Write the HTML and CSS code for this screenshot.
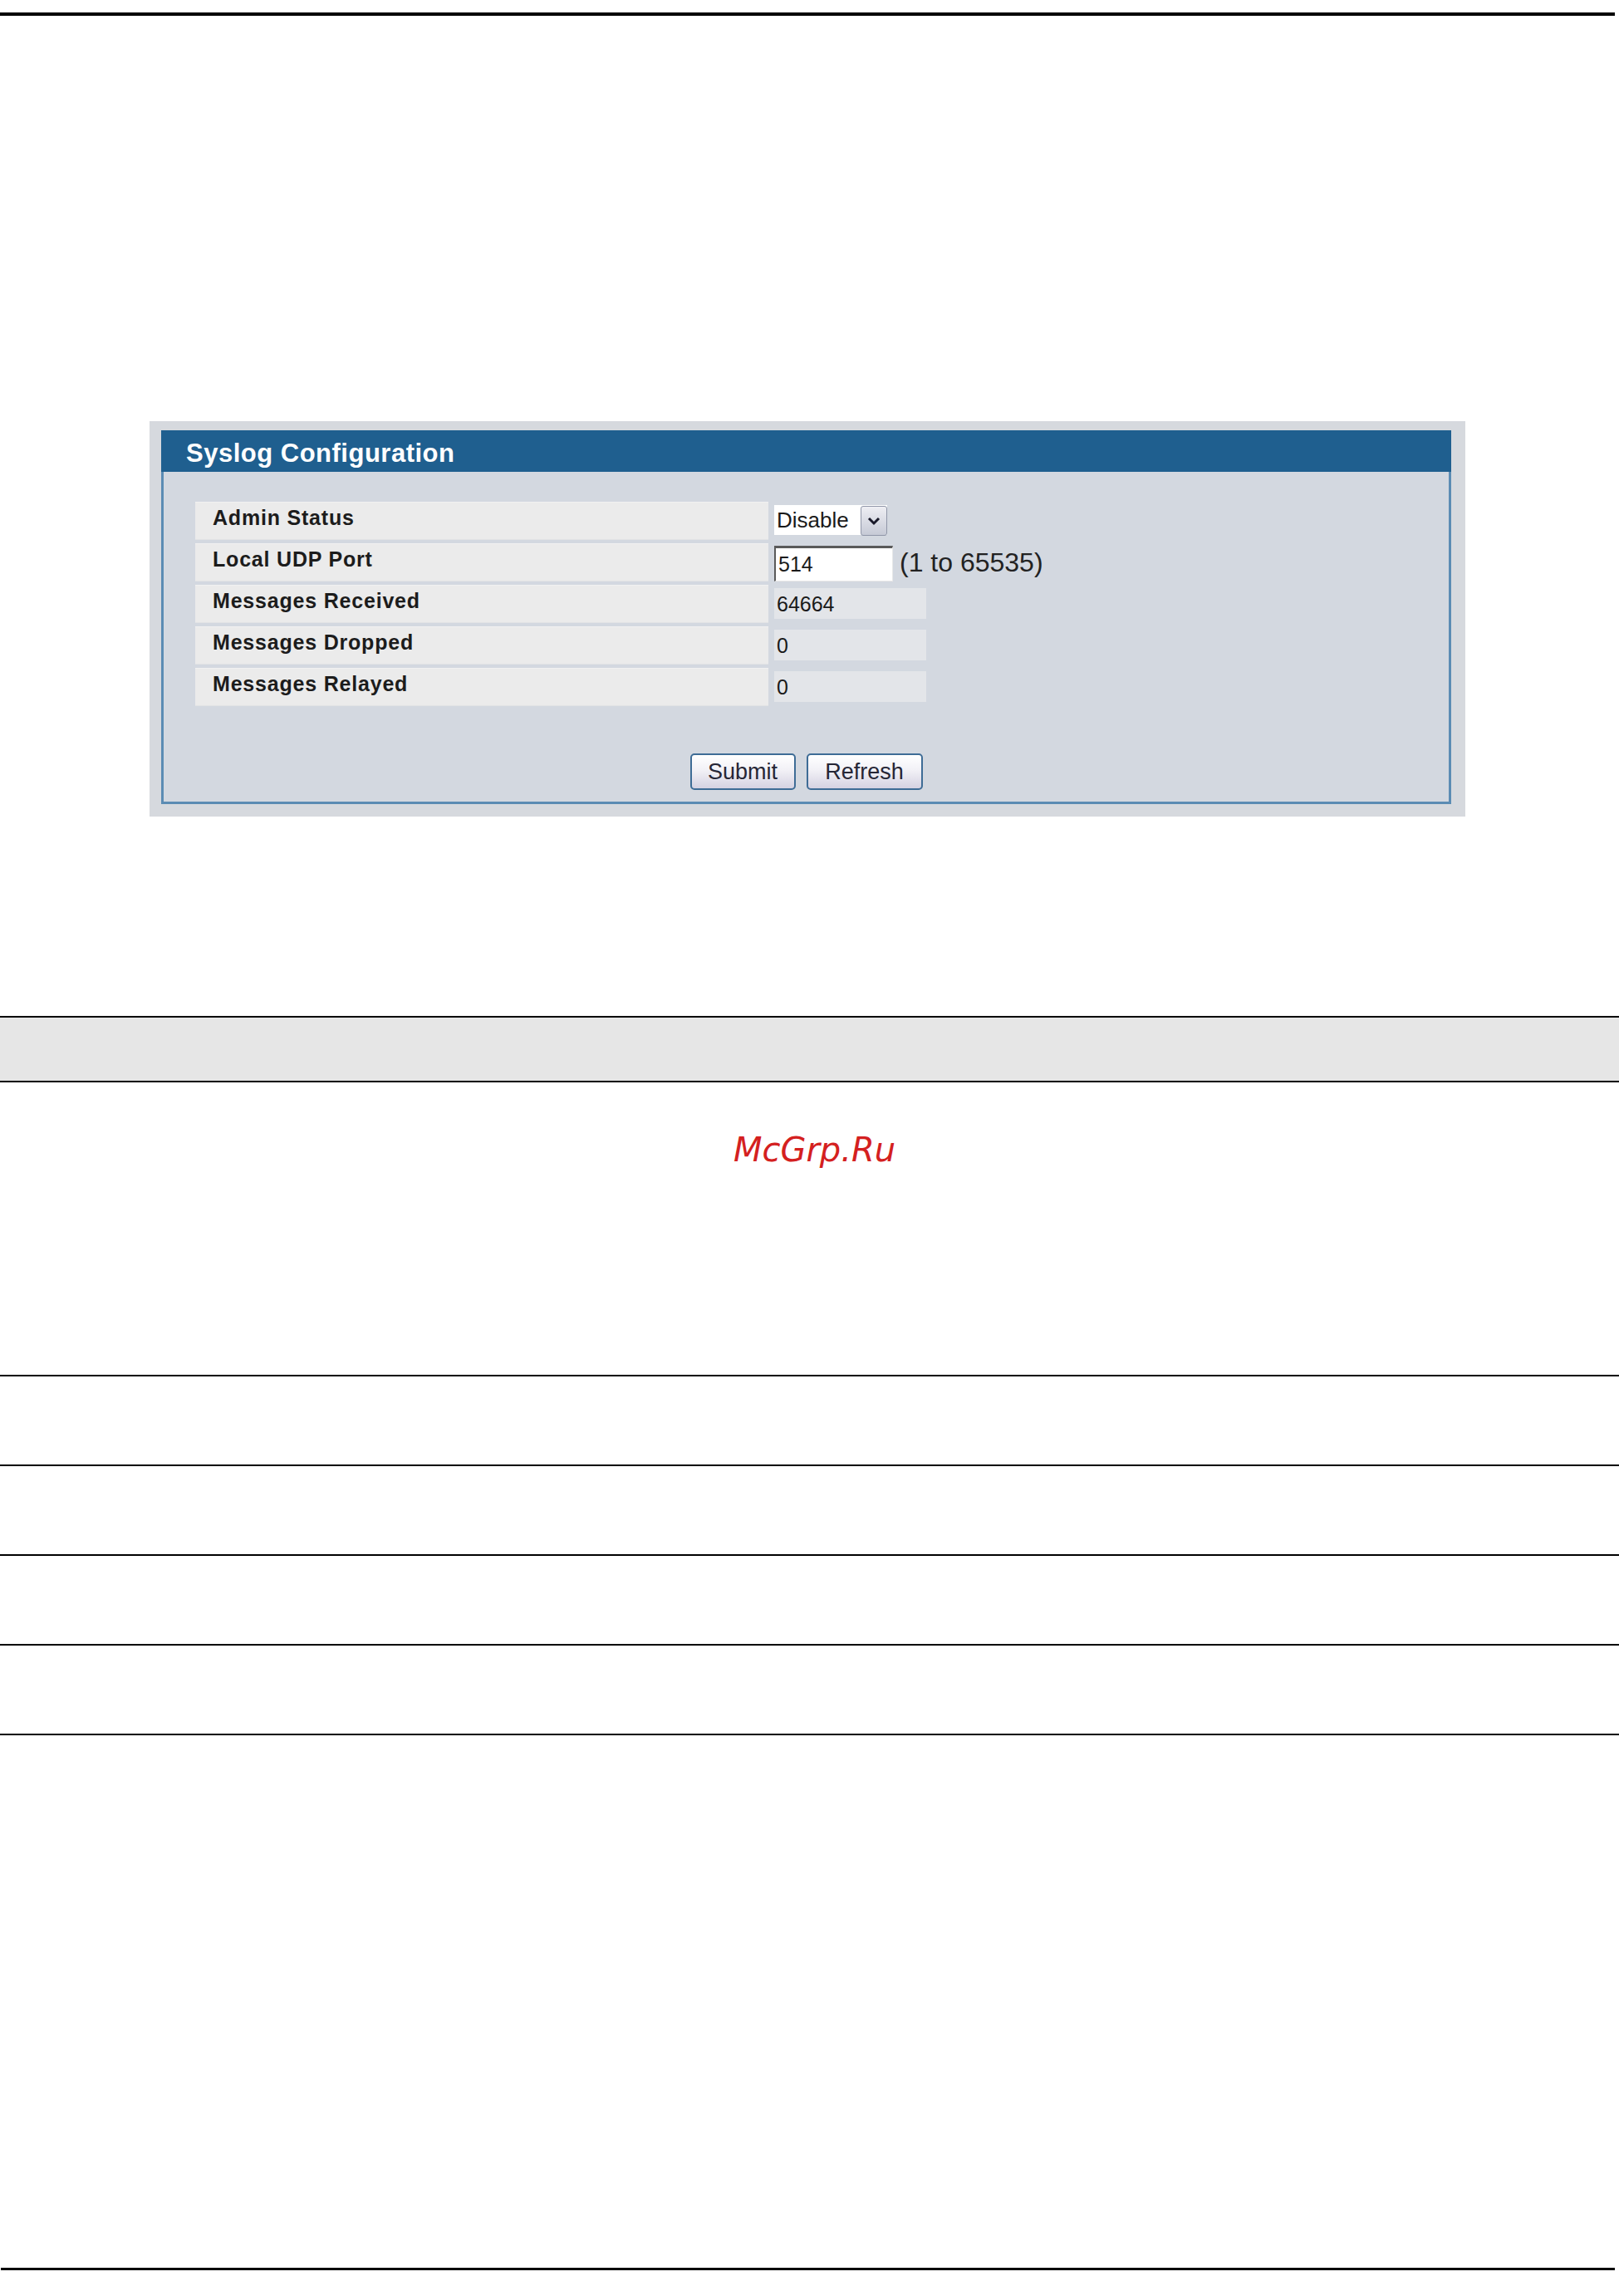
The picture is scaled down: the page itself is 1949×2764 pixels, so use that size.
FILE: index.html
```html
<!DOCTYPE html>
<html>
<head>
<meta charset="utf-8">
<title>Syslog Configuration</title>
<link rel="stylesheet" href="styles.css">
</head>
<body>
<div class="rule-top"></div>

<div class="panel-frame">
  <div class="panel">
    <div class="panel-head">Syslog Configuration</div>
    <div class="panel-body">
      <div class="grid">
        <div class="label">Admin Status</div>
        <div class="value">
          <div class="select">
            <span class="select-text">Disable</span>
            <span class="select-btn">
              <svg width="18" height="14" viewBox="0 0 18 14"><path d="M3 4 L9 10 L15 4" fill="none" stroke="#1a1a2a" stroke-width="3"/></svg>
            </span>
          </div>
        </div>

        <div class="label">Local UDP Port</div>
        <div class="value">
          <div class="input">514</div>
          <span class="hint">(1 to 65535)</span>
        </div>

        <div class="label">Messages Received</div>
        <div class="value"><div class="ro">64664</div></div>

        <div class="label">Messages Dropped</div>
        <div class="value"><div class="ro">0</div></div>

        <div class="label">Messages Relayed</div>
        <div class="value"><div class="ro">0</div></div>
      </div>
      <div class="buttons">
        <span class="btn btn-submit">Submit</span>
        <span class="btn btn-refresh">Refresh</span>
      </div>
    </div>
  </div>
</div>

<div class="band"></div>

<div class="watermark">McGrp.Ru</div>

<div class="rules">
  <div class="rule-row"></div>
  <div class="rule-row"></div>
  <div class="rule-row"></div>
  <div class="rule-row"></div>
</div>

<div class="rule-bottom"></div>
</body>
</html>
```

FILE: styles.css
```css
html, body {
  margin: 0;
  padding: 0;
  background: #ffffff;
}

body {
  font-family: "Liberation Sans", Arial, sans-serif;
  width: 1949px;
}

.rule-top {
  margin-top: 15px;
  width: 1944px;
  height: 4px;
  background: #000;
}

.panel-frame {
  margin: 488px 0 0 180px;
  width: 1584px;
  box-sizing: border-box;
  padding: 11px 17px 15px 14px;
  background: #d6d9de;
}

.panel-head {
  height: 50px;
  box-sizing: border-box;
  padding: 5px 0 0 30px;
  line-height: 45px;
  background: #1f5f8f;
  color: #ffffff;
  font-weight: bold;
  font-size: 31px;
  letter-spacing: 0.5px;
}

.panel-body {
  background: #d3d8e0;
  border: 3px solid #5b8cb4;
  border-top: none;
  padding: 36px 0 14px 38px;
}

.grid {
  display: grid;
  grid-template-columns: 690px 1fr;
  grid-auto-rows: 46px;
  column-gap: 7px;
  row-gap: 4px;
}

.label {
  background: #ebebeb;
  box-shadow: inset 0 -1px 0 #e2e3e5, inset 0 1px 0 #f1f1f1;
  padding-left: 21px;
  line-height: 38px;
  font-size: 25px;
  font-weight: bold;
  letter-spacing: 0.8px;
  color: #1c1c1c;
}

.value {
  display: flex;
  align-items: flex-start;
}

.select {
  margin-top: 4px;
  display: flex;
  height: 36px;
  width: 136px;
  background: #ffffff;
}

.select-text {
  flex: 1;
  padding-left: 3px;
  line-height: 36px;
  font-size: 26px;
  color: #1a1a1a;
}

.select-btn {
  width: 30px;
  height: 34px;
  margin-top: 1px;
  border: 1px solid #9096a8;
  border-radius: 3px;
  background: linear-gradient(#eeeef3, #c6cad6);
  display: flex;
  align-items: center;
  justify-content: center;
}

.input {
  margin-top: 3px;
  width: 143px;
  height: 43px;
  box-sizing: border-box;
  background: #ffffff;
  border-top: 3px solid #5a5a5a;
  border-left: 2px solid #5a5a5a;
  border-right: 1px solid #e8e8e8;
  border-bottom: 1px solid #e8e8e8;
  padding-left: 3px;
  line-height: 38px;
  font-size: 25px;
  color: #1a1a1a;
}

.hint {
  margin-left: 8px;
  margin-top: 4px;
  line-height: 38px;
  font-size: 32px;
  color: #222222;
}

.ro {
  margin-top: 4px;
  width: 183px;
  height: 37px;
  background: #e3e5e9;
  padding-left: 3px;
  box-sizing: border-box;
  line-height: 39px;
  font-size: 25px;
  color: #1a1a1a;
}

.buttons {
  margin-top: 57px;
  display: flex;
  justify-content: center;
  gap: 13px;
  margin-left: -38px;
}

.btn {
  height: 44px;
  box-sizing: border-box;
  border: 2px solid #3e6c96;
  border-radius: 5px;
  background: linear-gradient(#ffffff 0%, #f2f1f6 45%, #d5d2e2 100%);
  font-size: 27px;
  line-height: 40px;
  color: #262636;
  text-align: center;
}

.btn-submit {
  width: 127px;
}

.btn-refresh {
  width: 140px;
}

.band {
  margin-top: 240px;
  height: 80px;
  box-sizing: border-box;
  border-top: 2px solid #000;
  border-bottom: 2px solid #000;
  background: #e6e6e6;
}

.watermark {
  margin-top: 61px;
  padding-left: 12px;
  text-align: center;
  font-family: "DejaVu Sans", sans-serif;
  font-style: italic;
  font-size: 40px;
  line-height: 40px;
  color: #d42020;
}

.rules {
  margin-top: 251px;
  border-top: 2px solid #000;
}

.rule-row {
  height: 106px;
  border-bottom: 2px solid #000;
}

.rule-bottom {
  margin: 641px 0 0 1px;
  width: 1943px;
  height: 3px;
  background: #000;
}
```
